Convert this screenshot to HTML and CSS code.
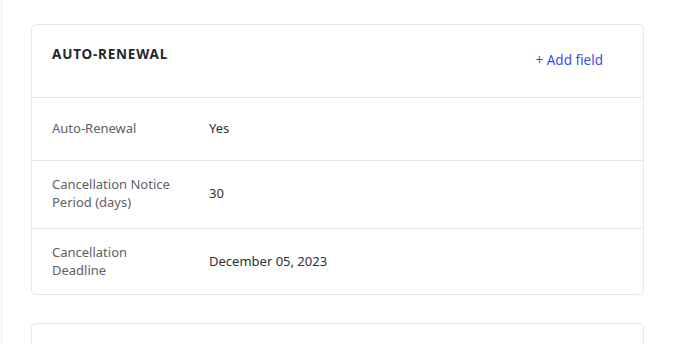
FILE: index.html
```html
<!DOCTYPE html>
<html lang="en">

<head>
    <meta charset="UTF-8">
    <title>Auto-Renewal</title>
    <link rel="stylesheet" href="styles.css">
</head>

<body>
    <div class="page">
        <div class="card">
            <div class="card-header">
                <h3>AUTO-RENEWAL</h3>
                <a href="#" class="add-field">+ Add field</a>
            </div>
            <div class="row">
                <div class="label">Auto-Renewal</div>
                <div class="value">Yes</div>
            </div>
            <div class="row">
                <div class="label">Cancellation Notice Period (days)</div>
                <div class="value">30</div>
            </div>
            <div class="row">
                <div class="label">Cancellation Deadline</div>
                <div class="value">December 05, 2023</div>
            </div>
        </div>

        <div class="card next"></div>
    </div>
</body>

</html>
```

FILE: styles.css
```css
body {
    margin: 0;
    font-family: "Noto Sans", sans-serif;
    background: #fff;
}

.page {
    margin-left: 1px;
    border-left: 1px solid #eceef3;
    padding: 24px 29px 0 29px;
    height: 344px;
    box-sizing: border-box;
    overflow: hidden;
}

.card {
    border: 1px solid #e6e7ef;
    border-radius: 5px;
    background: #fff;
}

.card.next {
    margin-top: 28px;
    height: 40px;
}

.card-header {
    display: flex;
    justify-content: space-between;
    height: 72px;
    padding: 0 40px 0 20px;
    border-bottom: 1px solid #e6e7ef;
}

.card-header h3 {
    margin: 20px 0 0;
    font-size: 13.5px;
    font-weight: 700;
    color: #26262c;
    letter-spacing: 0.8px;
}

.add-field {
    margin-top: 26px;
    font-size: 13.5px;
    color: #3a4cf0;
    text-decoration: none;
    height: 18px;
}

.row {
    display: flex;
    align-items: center;
    padding: 14px 20px 17px;
    min-height: 31px;
    border-bottom: 1px solid #e6e7ef;
    font-size: 13px;
}

.row:last-child {
    border-bottom: none;
    padding-bottom: 15px;
}

.label {
    width: 124px;
    margin-right: 33px;
    color: #5f6068;
    line-height: 18px;
}

.value {
    color: #2e2f36;
}
```
